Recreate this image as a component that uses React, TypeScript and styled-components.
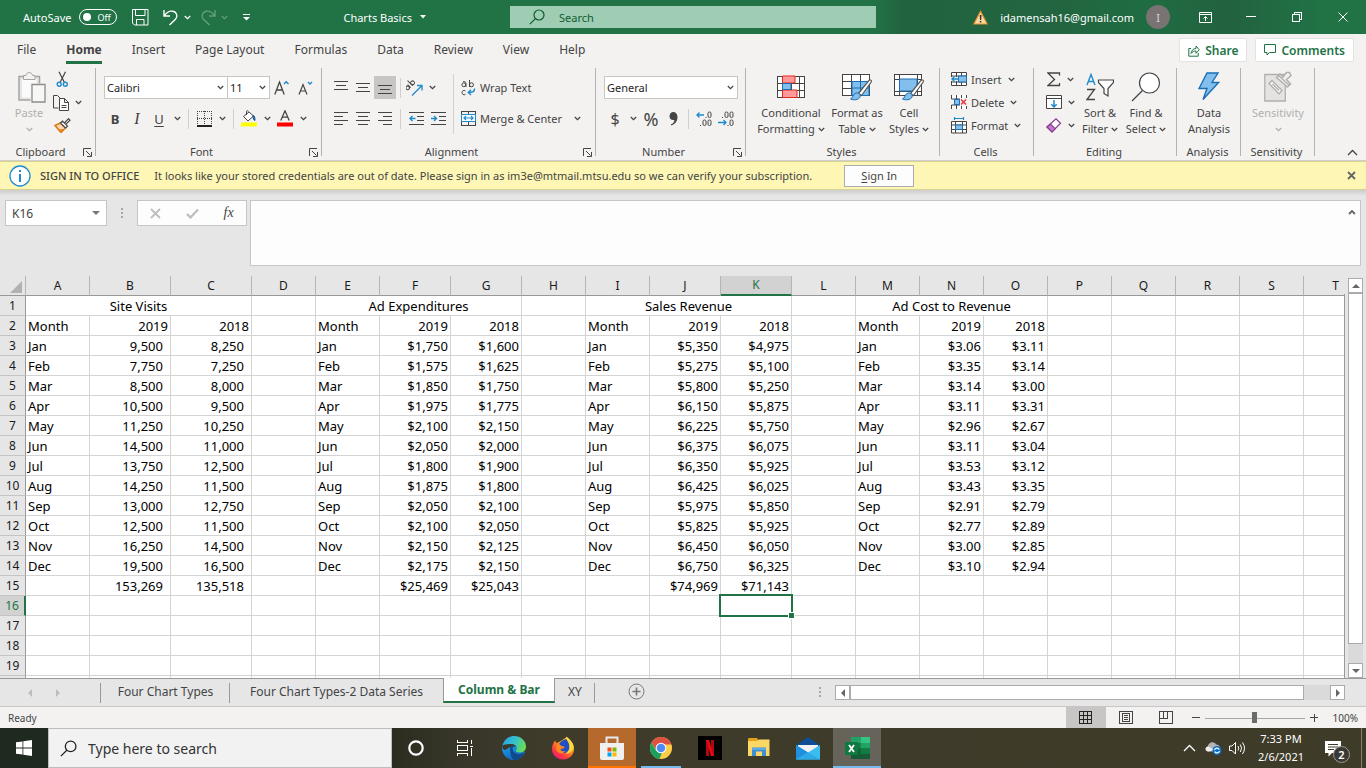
import React from 'react';
import styled, { createGlobalStyle, css } from 'styled-components';

const GlobalStyle = createGlobalStyle`
  *, *::before, *::after { box-sizing: border-box; }
  body { margin: 0; overflow: hidden; }
  body, button, input, select, textarea { font-family: "Noto Sans", "Open Sans", "Liberation Sans", sans-serif; }
  button { border: 0; padding: 0; background: none; color: inherit; font-size: inherit; cursor: default; }
  svg { display: block; flex: none; }
`;

const INK = '#444444';
const GREEN = '#217346';
const BLUE = '#1e8bcd';

const Window = styled.div`
  display: flex;
  flex-direction: column;
  height: 100vh;
  color: ${INK};
  font-size: 11px;
  background: #e6e6e6;
`;

/* ---------- title bar ---------- */

const TitleBar = styled.header`
  display: grid;
  grid-template-columns: 510fr 366fr 490fr;
  align-items: center;
  height: 34px;
  flex: none;
  color: #fff;
  background: linear-gradient(90deg, ${GREEN} 64%, #22633f 66%, #226540 77%, #1f6c42 84%, #22623f 90%, #217346 97%);
`;

const QuickAccess = styled.div`
  display: flex;
  align-items: center;
  padding-left: 23px;
`;

const AutoSave = styled.label`
  display: flex;
  align-items: center;
  gap: 8px;
`;

const Toggle = styled.button`
  display: flex;
  align-items: center;
  gap: 6px;
  width: 38px;
  height: 16px;
  padding-left: 3px;
  border: 1px solid #fff;
  border-radius: 8px;
  font-size: 9px;
  &::before {
    content: '';
    width: 8px;
    height: 8px;
    border-radius: 50%;
    background: #fff;
  }
`;

const BarButton = styled.button<{ $w: number; $dim?: boolean }>`
  display: flex;
  align-items: center;
  justify-content: center;
  gap: 5px;
  width: ${p => p.$w}px;
  height: 24px;
  opacity: ${p => (p.$dim ? 0.3 : 1)};
`;

const DocTitle = styled.button`
  display: flex;
  align-items: center;
  gap: 8px;
  margin-left: auto;
  margin-right: 84px;
`;

const SearchBox = styled.label`
  display: flex;
  align-items: center;
  gap: 14px;
  height: 22px;
  padding-left: 19px;
  background: #9fcdb3;
  color: #0e5c2f;
  input {
    flex: 1;
    min-width: 0;
    border: 0;
    padding: 0;
    outline: 0;
    background: none;
    font-size: 11px;
    color: inherit;
  }
  input::placeholder { color: inherit; opacity: 1; }
`;

const Account = styled.div`
  display: flex;
  align-items: center;
  justify-content: flex-end;
`;

const Email = styled.span`
  margin: 0 12px 0 12px;
`;

const Avatar = styled.span`
  display: flex;
  align-items: center;
  justify-content: center;
  width: 24px;
  height: 24px;
  margin-right: 12px;
  border-radius: 50%;
  background: #7a7374;
  color: #d8d4d4;
`;

/* ---------- ribbon ---------- */

const RibbonTabs = styled.nav`
  display: flex;
  align-items: center;
  flex: none;
  gap: 30px;
  height: 32px;
  padding: 0 12px 0 17px;
  background: #f3f2f1;
  font-size: 12px;
`;

const RibbonTab = styled.a<{ $active?: boolean }>`
  display: block;
  height: 28px;
  line-height: 28px;
  color: ${INK};
  text-decoration: none;
  ${p => p.$active && css`
    font-weight: 700;
    border-bottom: 3px solid ${GREEN};
  `}
`;

const TabActions = styled.div`
  display: flex;
  gap: 8px;
  margin-left: auto;
`;

const ActionButton = styled.button`
  display: flex;
  align-items: center;
  gap: 5px;
  height: 24px;
  padding: 0 8px;
  border: 1px solid #e4e2e0;
  border-radius: 2px;
  background: #fff;
  color: ${GREEN};
  font-weight: 600;
  font-size: 12px;
`;

const Ribbon = styled.section`
  display: flex;
  flex: none;
  height: 95px;
  background: #f3f2f1;
  border-bottom: 1px solid #d0cfce;
`;

const Group = styled.div<{ $w: number }>`
  display: flex;
  flex-direction: column;
  flex: none;
  width: ${p => p.$w}px;
  height: 90px;
  padding-top: 2px;
  background: linear-gradient(#b4b2b0, #b4b2b0) right 2px / 1px 100% no-repeat;
`;

const GroupBody = styled.div<{ $left?: number; $center?: boolean }>`
  display: flex;
  flex: 1;
  padding-left: ${p => p.$left ?? 8}px;
  justify-content: ${p => (p.$center ? 'center' : 'flex-start')};
`;

const GroupLabel = styled.div`
  display: flex;
  align-items: center;
  height: 16px;
  margin-bottom: -4px;
  padding-right: 3px;
  span { flex: 1; text-align: center; line-height: 16px; }
`;

const Launcher = styled.button`
  width: 12px;
  height: 12px;
  display: flex;
  align-items: center;
  justify-content: center;
`;

const Stack = styled.div`
  display: flex;
  flex-direction: column;
  gap: 8px;
  padding-top: 8px;
`;

const ToolRow = styled.div`
  display: flex;
  align-items: center;
  height: 23px;
`;

const Tool = styled.button<{ $w?: number; $on?: boolean }>`
  display: flex;
  align-items: center;
  justify-content: center;
  gap: 6px;
  width: ${p => p.$w ?? 22}px;
  height: 23px;
  background: ${p => (p.$on ? '#c8c6c4' : 'none')};
`;

const LabelTool = styled.button<{ $gap?: number }>`
  display: flex;
  align-items: center;
  gap: 4px;
  height: 23px;
  white-space: nowrap;
  span { margin-right: ${p => p.$gap ?? 2}px; }
`;

const Rule = styled.i<{ $h?: number }>`
  width: 1px;
  height: ${p => p.$h ?? 20}px;
  margin: 0 4px;
  background: #d2d0ce;
`;

const SideRule = styled(Rule)`
  margin: 6px 7px 0 4px;
`;

const Glyph = styled.span<{ $size?: number; $bold?: boolean; $italic?: boolean; $underline?: boolean }>`
  font-size: ${p => p.$size ?? 13}px;
  line-height: 20px;
  font-weight: ${p => (p.$bold ? 700 : 400)};
  font-style: ${p => (p.$italic ? 'italic' : 'normal')};
  font-family: ${p => (p.$italic ? '"Liberation Serif", serif' : 'inherit')};
  text-decoration: ${p => (p.$underline ? 'underline' : 'none')};
  text-underline-offset: 2px;
`;

const Combo = styled.label<{ $w: number }>`
  display: flex;
  align-items: center;
  width: ${p => p.$w}px;
  height: 23px;
  padding-right: 3px;
  border: 1px solid #c8c6c4;
  background: #fff;
  & + & { border-left: 0; }
  select {
    flex: 1;
    min-width: 0;
    appearance: none;
    border: 0;
    outline: 0;
    padding: 0 0 0 2px;
    background: none;
    font-size: 11px;
    color: #262626;
  }
`;

const BigTool = styled.button<{ $w: number; $dim?: boolean }>`
  display: flex;
  flex-direction: column;
  align-items: center;
  width: ${p => p.$w}px;
  color: ${p => (p.$dim ? '#b1afad' : INK)};
  line-height: 16px;
  white-space: nowrap;
`;

const BigIcon = styled.span`
  display: flex;
  align-items: center;
  height: 37px;
`;

const BigLine = styled.span`
  display: flex;
  align-items: center;
  justify-content: center;
  gap: 3px;
  height: 16px;
`;

const SmallStack = styled.div`
  display: flex;
  flex-direction: column;
`;

const CollapseCell = styled.div`
  flex: 1;
  display: flex;
  align-items: flex-end;
  justify-content: flex-end;
  padding: 0 8px 4px 0;
`;

/* ---------- message bar ---------- */

const MessageBar = styled.div`
  display: flex;
  align-items: center;
  flex: none;
  height: 29px;
  padding: 0 10px 0 9px;
  border: solid #d8d391;
  border-width: 1px 0;
  background: #fdf6b5;
  font-size: 11px;
  white-space: nowrap;
  strong { margin: 0 15px 0 9px; font-weight: 500; }
`;

const SignIn = styled.button`
  width: 70px;
  height: 22px;
  margin-left: 32px;
  border: 1px solid #ababab;
  background: #fdfdfd;
  font-size: 11px;
  u { text-underline-offset: 2px; }
`;

const CloseMessage = styled.button`
  margin-left: auto;
`;

/* ---------- formula bar ---------- */

const FormulaBar = styled.div`
  display: flex;
  align-items: flex-start;
  flex: none;
  height: 86px;
  padding: 10px 5px 10px 5px;
  background: linear-gradient(#cdcdcd, #e6e6e6 6px);
`;

const NameBox = styled.label`
  display: flex;
  align-items: center;
  width: 102px;
  height: 26px;
  padding: 0 6px;
  border: 1px solid #c6c6c6;
  background: #fff;
  input {
    flex: 1;
    min-width: 0;
    border: 0;
    outline: 0;
    padding: 0;
    font-size: 12px;
    color: ${INK};
  }
`;

const Dots = styled.i`
  display: block;
  width: 2px;
  height: 10px;
  background: repeating-linear-gradient(#a6a6a6 0 2px, transparent 2px 4px);
`;

const DotsSlot = styled.span`
  display: flex;
  align-items: center;
  justify-content: center;
  width: 30px;
  height: 26px;
`;

const FormulaButtons = styled.div`
  display: flex;
  align-items: center;
  justify-content: space-around;
  width: 110px;
  height: 26px;
  margin-right: 3px;
  border: 1px solid #c6c6c6;
  background: #fdfdfd;
`;

const FormulaField = styled.div`
  display: flex;
  flex: 1;
  align-self: stretch;
  padding: 8px 4px 0 0;
  border: 1px solid #c6c6c6;
  background: #fdfdfd;
  textarea {
    flex: 1;
    border: 0;
    outline: 0;
    resize: none;
    background: none;
  }
  button { align-self: flex-start; }
`;

/* ---------- worksheet ---------- */

const Workspace = styled.main`
  display: flex;
  flex: 1;
  min-height: 0;
`;

const SheetFrame = styled.div`
  flex: 1;
  min-width: 0;
  overflow: hidden;
  background: #fff;
  border-right: 1px solid #999;
  border-image: linear-gradient(#e6e6e6 19px, #999 19px) 1;
`;

const Sheet = styled.table`
  table-layout: fixed;
  width: 1368px;
  border-collapse: separate;
  border-spacing: 0;
  color: #000;
  font-size: 13px;
`;

const ColumnHead = styled.th<{ $selected?: boolean }>`
  height: 20px;
  padding: 0;
  line-height: 18px;
  font-weight: 400;
  font-size: 12px;
  color: ${p => (p.$selected ? GREEN : '#1a1a1a')};
  background: ${p => (p.$selected ? '#d2d2d2' : '#e6e6e6')};
  border-right: 1px solid #b5b5b5;
  border-bottom: ${p => (p.$selected ? `2px solid ${GREEN}` : '1px solid #999')};
`;

const Corner = styled(ColumnHead)`
  svg { margin: 2px 3px 0 auto; }
`;

const RowHead = styled.th<{ $selected?: boolean }>`
  height: 20px;
  padding: 0;
  line-height: 18px;
  font-weight: 400;
  font-size: 12px;
  color: ${p => (p.$selected ? GREEN : '#1a1a1a')};
  background: ${p => (p.$selected ? '#d2d2d2' : '#e6e6e6')};
  border-right: ${p => (p.$selected ? `2px solid ${GREEN}` : '1px solid #999')};
  border-bottom: 1px solid #c4c4c4;
`;

const Cell = styled.td<{ $align?: 'left' | 'right' | 'center'; $accounting?: boolean }>`
  position: relative;
  height: 20px;
  padding: 0 ${p => (p.$accounting ? 7 : 2)}px 0 2px;
  line-height: 18px;
  white-space: nowrap;
  text-align: ${p => p.$align ?? 'left'};
  border-right: 1px solid #d4d4d4;
  border-bottom: 1px solid #d4d4d4;
`;

const Selection = styled.div`
  position: absolute;
  z-index: 1;
  inset: -2px;
  border: 2px solid ${GREEN};
  &::after {
    content: '';
    position: absolute;
    right: -4px;
    bottom: -4px;
    width: 7px;
    height: 7px;
    border: solid #fff;
    border-width: 1px;
    background: ${GREEN};
  }
`;

const VScroll = styled.div`
  display: flex;
  flex-direction: column;
  width: 15px;
  margin: 2px 3px 0 3px;
  background: #dadada;
`;

const ScrollButton = styled.button`
  display: flex;
  align-items: center;
  justify-content: center;
  flex: none;
  width: 15px;
  height: 15px;
  border: 1px solid #ababab;
  background: #fff;
`;

const VThumb = styled.div`
  flex: 1;
  margin-bottom: 19px;
  border: 1px solid #ababab;
  background: #fff;
`;

/* ---------- sheet tabs ---------- */

const SheetBar = styled.div`
  display: flex;
  flex: none;
  height: 29px;
  border-top: 1px solid #999;
  border-bottom: 1px solid #c6c6c6;
  font-size: 12px;
`;

const SheetNav = styled.div`
  display: flex;
  align-items: center;
  justify-content: center;
  gap: 20px;
  width: 101px;
  padding-right: 14px;
  background: linear-gradient(#999, #999) right 4px / 1px 20px no-repeat;
`;

const SheetTab = styled.button<{ $w: number; $active?: boolean; $rule?: boolean }>`
  width: ${p => p.$w}px;
  height: 27px;
  padding-bottom: 2px;
  white-space: nowrap;
  ${p => p.$rule && css`
    background: linear-gradient(#999, #999) right 4px / 1px 20px no-repeat;
  `}
  ${p => p.$active && css`
    height: 25px;
    margin-top: -1px;
    padding-bottom: 0;
    color: ${GREEN};
    font-weight: 700;
    background: #fff;
    border: solid #999;
    border-width: 0 1px;
    border-bottom: 2px solid ${GREEN};
  `}
`;

const AddSheet = styled.button`
  margin-left: 33px;
  padding-bottom: 2px;
`;

const HScroll = styled.div`
  display: flex;
  width: 510px;
  height: 15px;
  margin: 6px 21px 0 14px;
  background: #dadada;
`;

const HThumb = styled.div`
  flex: 1;
  margin: 0 26px 0 0;
  border: 1px solid #ababab;
  background: #fff;
`;

const SheetBarEnd = styled.div`
  display: flex;
  margin-left: auto;
  > i { margin-top: 8px; }
`;

/* ---------- status bar ---------- */

const StatusBar = styled.footer`
  display: flex;
  align-items: center;
  flex: none;
  height: 21px;
  padding: 0 8px;
  background: #f3f2f1;
  font-size: 10px;
`;

const ViewButton = styled.button<{ $on?: boolean }>`
  display: flex;
  align-items: center;
  justify-content: center;
  width: 40px;
  height: 21px;
  background: ${p => (p.$on ? '#c8c6c4' : 'none')};
`;

const StatusEnd = styled.div`
  display: flex;
  align-items: center;
  margin-left: auto;
`;

const ZoomControl = styled.div`
  display: flex;
  align-items: center;
  gap: 5px;
  margin: 0 15px 0 6px;
`;

const ZoomSlider = styled.input`
  appearance: none;
  width: 100px;
  height: 12px;
  margin: 0;
  background: linear-gradient(#a6a6a6, #a6a6a6) 0 6px / 100% 1px no-repeat;
  &::-webkit-slider-thumb {
    appearance: none;
    width: 5px;
    height: 11px;
    background: #6b6b6b;
  }
`;

/* ---------- taskbar ---------- */

const Taskbar = styled.footer`
  display: flex;
  flex: none;
  height: 40px;
  color: #fff;
  background: linear-gradient(90deg, #1e291f 0, #1e291f 48px, #2b2c1f 390px, #38362a 460px, #3e3b2a 540px, #3e3b29 100%);
`;

const StartButton = styled.button`
  display: flex;
  align-items: center;
  justify-content: center;
  width: 48px;
`;

const TaskSearch = styled.label`
  display: flex;
  align-items: center;
  gap: 11px;
  width: 344px;
  padding-left: 11px;
  border: 1px solid #bdbdbd;
  background: #f2f2f2;
  color: #1f1f1f;
  input {
    flex: 1;
    min-width: 0;
    border: 0;
    outline: 0;
    padding: 0;
    background: none;
    font-size: 14px;
    color: inherit;
  }
  input::placeholder { color: #333; opacity: 1; }
`;

const TaskApps = styled.div`
  display: flex;
  gap: 1px;
`;

const TaskApp = styled.button<{ $state?: 'alert' | 'running' | 'active' }>`
  display: flex;
  align-items: center;
  justify-content: center;
  width: 48px;
  height: 40px;
  ${p => p.$state === 'alert' && css`
    background: #b5692c;
    box-shadow: inset 0 -2px #ff7300;
  `}
  ${p => p.$state === 'running' && css`
    background: linear-gradient(#76b9ed, #76b9ed) 4px 38px / 40px 2px no-repeat;
  `}
  ${p => p.$state === 'active' && css`
    background: #65635a;
    box-shadow: inset 0 -2px #76b9ed;
  `}
`;

const Tray = styled.div`
  display: flex;
  align-items: center;
  margin-left: auto;
`;

const Clock = styled.time`
  width: 60px;
  margin: 0 5px 0 2px;
  font-size: 11px;
  line-height: 18px;
  text-align: center;
`;

const Notifications = styled.button`
  position: relative;
  width: 24px;
  height: 24px;
  margin: 2px 12px 0 9px;
`;

const Badge = styled.span`
  position: absolute;
  right: -1px;
  bottom: -2px;
  width: 17px;
  height: 17px;
  border: 1px solid #9c9a92;
  border-radius: 50%;
  background: #3a3938;
  font-size: 11px;
  font-weight: 600;
  line-height: 15px;
  text-align: center;
`;

const ShowDesktop = styled.button`
  width: 5px;
  height: 40px;
  border-left: 1px solid #85836f;
`;

/* ---------- icons ---------- */

type IconProps = { w: number; h: number; children: React.ReactNode; crisp?: boolean; stroke?: string };
const Icon = ({ w, h, children, crisp, stroke = INK }: IconProps) => (
  <svg width={w} height={h} viewBox={`0 0 ${w} ${h}`} fill="none" stroke={stroke} shapeRendering={crisp ? 'crispEdges' : 'auto'} aria-hidden="true">
    {children}
  </svg>
);

const Chevron = ({ color = INK }: { color?: string }) => (
  <Icon w={7} h={5} stroke={color}><path d="M.8 1 3.5 3.6 6.2 1" strokeWidth="1.3" /></Icon>
);

const Triangle = ({ dir, color = '#666' }: { dir: 'up' | 'down' | 'left' | 'right'; color?: string }) => {
  const d = { up: 'M0 6 4 2 8 6z', down: 'M0 2h8L4 6z', left: 'M6 0v8L2 4z', right: 'M2 0v8l4-4z' }[dir];
  return <Icon w={8} h={8} stroke="none"><path d={d} fill={color} /></Icon>;
};

const LauncherIcon = () => (
  <Icon w={9} h={9}><path d="M.5 8V.5H8M3 3l4.500 4.500M8.500 4v4.500H4" /></Icon>
);

const Magnifier = ({ size, color }: { size: number; color: string }) => (
  <svg width={size} height={size} viewBox="0 0 16 16" fill="none" stroke={color} strokeWidth="1.2" aria-hidden="true">
    <circle cx="10" cy="6" r="5" /><path d="M6.4 9.6.8 15.2" />
  </svg>
);

const lineSets: Record<string, number[][]> = {
  top: [[0, 14, 1], [2, 12, 5], [0, 14, 9]],
  middle: [[0, 14, 3], [2, 12, 7], [0, 14, 11]],
  bottom: [[0, 14, 5], [2, 12, 9], [0, 14, 13]],
  left: [[0, 14, 1], [0, 9, 5], [0, 14, 9], [0, 9, 13]],
  center: [[0, 14, 1], [2, 12, 5], [0, 14, 9], [2, 12, 13]],
  right: [[0, 14, 1], [5, 14, 5], [0, 14, 9], [5, 14, 13]],
};
const Lines = ({ kind }: { kind: string }) => (
  <Icon w={14} h={15} crisp>
    {lineSets[kind].map(([a, b, y]) => <path key={y} d={`M${a} ${y}.5H${b}`} />)}
  </Icon>
);

const Indent = ({ out }: { out?: boolean }) => (
  <Icon w={15} h={15}>
    <path d="M0 1.5h15M8 5.5h7M8 9.5h7M0 13.5h15" shapeRendering="crispEdges" />
    <path d={out ? 'M6.5 7.5H1M3.5 5 1 7.5 3.5 10' : 'M0 7.5h5.5M3 5l2.5 2.5L3 10'} stroke={BLUE} strokeWidth="1.4" />
  </Icon>
);

const SaveIcon = () => (
  <Icon w={17} h={17} stroke="#fff"><path d="M.5.5h15.500v15.500H2.500l-2-2zM3.500.5v6h9.500v-6M4.500 16v-5.500h7.500V16" /></Icon>
);
const UndoIcon = () => (
  <Icon w={16} h={17} stroke="#fff"><path d="M1 1v6h6M1.300 6.700C4 3 7 1.500 10 2.300c4 1 5 5.200 2.500 8L6.500 16" strokeWidth="1.4" /></Icon>
);
const RedoIcon = () => (
  <Icon w={16} h={17} stroke="#fff"><path d="M15 1v6H9M14.700 6.700C12 3 9 1.500 6 2.300c-4 1-5 5.200-2.500 8L9.500 16" strokeWidth="1.4" /></Icon>
);
const WarningIcon = () => (
  <Icon w={15} h={15} stroke="none">
    <path d="M7.500 0 15 14.500H0z" fill="#e8912d" /><path d="M7.500 2.500 13.300 13.500H1.700z" fill="#fbd9a0" />
    <path d="M6.700 5h1.800l-.3 5H7zM6.800 11h1.600v1.600H6.800z" fill="#333" />
  </Icon>
);

const PasteIcon = () => (
  <Icon w={34} h={33} stroke="#a6a4a2">
    <g transform="translate(6 2)">
      <path d="M1 4.500h20.500V28H1z" fill="#e6e5e4" strokeWidth="1.500" />
      <path d="M4 7h14.500v18.500H4z" fill="#fafafa" stroke="none" />
      <path d="M5.500 7.500v-4H8c.4-4 6-4 6.500 0H17v4z" fill="#f3f2f1" />
      <path d="M12.500 11.500H22V29h-9.500z" fill="#f3f2f1" stroke="none" />
      <path d="M14 12.500h13V30H14z" fill="#f7f7f6" stroke="#8f8d8b" strokeWidth="1.300" />
    </g>
  </Icon>
);
const CutIcon = () => (
  <Icon w={13} h={17}>
    <path d="M3 .8 8.300 11.300M9.500.8 4.200 11.300" strokeWidth="1.200" />
    <circle cx="3.200" cy="13.300" r="2" stroke={BLUE} strokeWidth="1.400" /><circle cx="9.300" cy="13.300" r="2" stroke={BLUE} strokeWidth="1.400" />
  </Icon>
);
const CopyIcon = () => (
  <Icon w={16} h={16}>
    <path d="M5.500 13H.5V.5h4L7 3" /><path d="M6.500 3.500h5l4 4v8h-9zM11.500 3.500v4h4M8.500 10.500h5M8.500 12.500h5" fill="#fff" />
  </Icon>
);
const BrushIcon = () => (
  <Icon w={17} h={15}>
    <path d="M1 7.500 6.500 5l5 5L7 14.500z" fill="#fcd9b0" stroke="#e07b16" strokeWidth="1.500" /><path d="m1.500 8 5.500 6 3-2.500-5 .5z" fill="#f0912f" stroke="#e07b16" />
    <path d="M6.500 5 8.500 3.200l5 5-2 1.800zM10.500 5l4-4.300 1.500 1.500-4 4" fill="#fff" strokeWidth="1.200" />
  </Icon>
);
const GrowFont = ({ shrink }: { shrink?: boolean }) => (
  <Icon w={16} h={16}>
    {shrink
      ? <path d="M1 14.500 5 4.500l4 10M2.500 11h5" strokeWidth="1.200" />
      : <path d="M.8 14.500 5.500 2l4.700 12.500M2.500 10h6" strokeWidth="1.300" />}
    <path d={shrink ? 'm10 2 2 2 2-2' : 'm10 4 2.200-2.300L14.500 4'} stroke={BLUE} strokeWidth="1.400" />
  </Icon>
);
const BordersIcon = () => (
  <Icon w={15} h={16} crisp>
    <path d="M0 .5h15M.5 0v14M14.500 0v14M7.500 0v14M0 7.500h15" strokeDasharray="1 1" /><path d="M0 14.500h15" strokeWidth="2" stroke="#222" />
  </Icon>
);
const FillIcon = () => (
  <Icon w={16} h={17}>
    <path d="m2.500 6.500 5.500-4.500L12.500 6 7 11z" fill="#fff" /><path d="M5.500 5V1.500c0-1 2-1 2 0" /><path d="M12 5.500c1.500 0 2 2 2 5-1.200-.2-2-2-2-5z" fill={BLUE} stroke="#11508c" />
    <path d="M0 14.500h16" stroke="#ffff00" strokeWidth="4" />
  </Icon>
);
const FontColorIcon = () => (
  <Icon w={16} h={17}>
    <path d="M3.800 10.500 8 .8l4.200 9.700M5.300 7.200h5.400" strokeWidth="1.300" /><path d="M0 14.500h16" stroke="#ff0000" strokeWidth="4" />
  </Icon>
);
const OrientIcon = () => (
  <Icon w={17} h={16}>
    <g transform="translate(1.500 10.500) rotate(-45)">
      <circle cx="2" cy="-1.800" r="1.800" /><path d="M4.200-4v4.300M7-7V.3" /><circle cx="9" cy="-1.800" r="1.900" />
    </g>
    <path d="M6 15.500 15.500 6M11 5.500h5v5" stroke={BLUE} strokeWidth="1.300" />
  </Icon>
);
const WrapIcon = () => (
  <Icon w={15} h={17}>
    <circle cx="2.800" cy="5.800" r="1.900" /><path d="M2 2.800c1.500-.5 3 0 3 1.600V8M8.500 1v7" /><circle cx="10.500" cy="5.800" r="2" /><path d="M4.500 11.800c-1.800-1-3.500 0-3.500 1.800s1.700 2.700 3.500 1.800" />
    <path d="M13.500 9.500c.5 3-2 4-6 4M10 10.800 7.200 13.500 10 16" stroke={BLUE} strokeWidth="1.400" />
  </Icon>
);
const MergeIcon = () => (
  <Icon w={15} h={15}>
    <path d="M.5.5h14v14H.5zM7.500 0v4M7.500 11v4" shapeRendering="crispEdges" />
    <path d="M.5 3.500h14v7H.5z" fill="#fff" stroke={BLUE} /><path d="M3 7h9M5 5 3 7l2 2M10 5l2 2-2 2" stroke={BLUE} strokeWidth="1.200" />
  </Icon>
);
const DecimalIcon = ({ less }: { less?: boolean }) => (
  <Icon w={16} h={16}>
    {less ? (
      <>
        <path d="M4 6.500h1" /><rect x="7" y="1" width="3" height="5.500" rx="1.400" /><rect x="12" y="1" width="3" height="5.500" rx="1.400" />
        <rect x="12" y="9" width="3" height="5.500" rx="1.400" /><path d="M9.500 14.500h1" /><path d="M0 11.500h8M5.500 9 8 11.500 5.500 14" stroke={BLUE} strokeWidth="1.300" />
      </>
    ) : (
      <>
        <rect x="12" y="1" width="3" height="5.500" rx="1.400" /><path d="M9.500 6.500h1" /><path d="M8 4H.5M3.500 1.500 1 4l2.500 2.500" stroke={BLUE} strokeWidth="1.300" />
        <path d="M4 14.500h1" /><rect x="7" y="9" width="3" height="5.500" rx="1.400" /><rect x="12" y="9" width="3" height="5.500" rx="1.400" />
      </>
    )}
  </Icon>
);
const CondIcon = () => (
  <Icon w={28} h={24}>
    <path d="M.5 1h27v21.500H.5zM.5 8h27M.5 15h27M5.500 1v21.500M14 1v21.500M22.500 1v21.500" fill="#fff" shapeRendering="crispEdges" />
    <path d="M5.500 1h12.500v7H5.500zM5.500 15h14.500v7.500H5.500z" fill="#ff9a9a" stroke="#e0281c" /><path d="M5.500 8.500H14v6H5.500z" fill="#83bfec" stroke="#1c6fb5" />
  </Icon>
);
const Paintbrush = () => (
  <>
    <path d="M16.500 20.500 27 7.500c1-1.500 3 0 2.200 1.500L19.500 22.500z" fill="#fff" stroke="#555" strokeWidth="1.200" />
    <path d="M8.500 26c2.500-.5 2-5 5.500-6 2.500-.6 5 1.500 4 4-1.200 3-6.500 3.500-9.500 2z" fill="#83bfec" stroke="#1c6fb5" />
  </>
);
const TableIcon = () => (
  <Icon w={30} h={28}>
    <path d="M.5 1h27v21.500H.5zM.5 8h27M.5 15h27M9.500 1v21.500M18.500 1v21.500" fill="#fff" shapeRendering="crispEdges" />
    <path d="M10 8.500h17v14H10z" fill="#83bfec" stroke="#1c6fb5" /><path d="M18.500 8.500v14M10 15h17" stroke="#1c6fb5" /><Paintbrush />
  </Icon>
);
const CellStyleIcon = () => (
  <Icon w={30} h={28}>
    <path d="M.5 1h27v21.500H.5zM.5 6h27M.5 18h27M5.500 1v21.500M23 1v21.500" fill="#fff" shapeRendering="crispEdges" />
    <path d="M5.500 6h17.500v12H5.500z" fill="#83bfec" stroke="#1c6fb5" /><Paintbrush />
  </Icon>
);
const InsertIcon = () => (
  <Icon w={16} h={15}>
    <path d="M.5.5h15v13H.5zM.5 4h15M.5 10h15M5.500.5V14M10.500.5V14" fill="#fff" />
    <path d="M7.500 4h8v6h-8z" fill="#83bfec" stroke="#1c6fb5" /><path d="M0 5h7v4H0z" fill="#f3f2f1" stroke="none" /><path d="M8 7H1M3.500 4.500 1 7l2.500 2.500" stroke={BLUE} strokeWidth="1.400" />
  </Icon>
);
const DeleteIcon = () => (
  <Icon w={16} h={15}>
    <path d="M.5 0v4h15V0M.5 14v-4h15v4M5.500 0v4M10.500 0v4M5.500 10v4M10.500 10v4" fill="#fff" />
    <path d="M3.500 4.500h5v5h-5z" fill="#83bfec" stroke="#1c6fb5" /><path d="M9 3h7v8H9z" fill="#f3f2f1" stroke="none" /><path d="m10 4.500 5 5M15 4.500l-5 5" stroke="#e8383f" strokeWidth="1.600" />
  </Icon>
);
const FormatIcon = () => (
  <Icon w={16} h={17}>
    <path d="M3.500 0v3M12.500 0v3M3.500 1.500h9" stroke={BLUE} strokeWidth="1.200" />
    <path d="M.5 4.500h15v11.500H.5zM.5 8h15M.5 12.500h15M4.500 4v12M11.500 4v12" fill="#fff" /><path d="M4.500 8h7v4.500h-7z" fill="#83bfec" stroke="#1c6fb5" />
  </Icon>
);
const SumIcon = () => <Icon w={14} h={15}><path d="M12.500 3.500V1H1l6.500 6.500L1 13.500h11.500V11" strokeWidth="1.300" /></Icon>;
const FillDownIcon = () => (
  <Icon w={16} h={15}><path d="M.5.5h15v13H.5zM.5 3.500h15" fill="#fff" /><path d="M8 5v7M5.300 9.300 8 12l2.700-2.700" stroke={BLUE} strokeWidth="1.500" /></Icon>
);
const EraserIcon = () => (
  <Icon w={16} h={15}>
    <path d="M1 9 10 .8l4.500 4.400L6 14z" fill="#fff" stroke="#8a3a93" strokeWidth="1.200" /><path d="m1 9 3.500-3 4.700 4.700L6 14z" fill="#c17ccb" stroke="#8a3a93" strokeWidth="1.200" />
  </Icon>
);
const SortIcon = () => (
  <Icon w={28} h={28}>
    <path d="M1 12 5 1.500 9 12M2.300 8.500h5.400" stroke={BLUE} strokeWidth="1.400" /><path d="M1 16.500h7.500L1 26.500h8" strokeWidth="1.300" />
    <path d="M12.500 7h15v2.500L22 15.500V23l-4-2.500v-5l-5.500-6z" fill="#fff" strokeWidth="1.200" />
  </Icon>
);
const FindIcon = () => (
  <Icon w={30} h={30}><circle cx="18.500" cy="11" r="10" fill="#fff" strokeWidth="1.200" /><path d="M11.500 18.500 1 29" strokeWidth="1.300" /></Icon>
);
const BoltIcon = () => (
  <Icon w={22} h={29} stroke="#1c6fb5"><path d="M9 1h11l-6 9.500h6.500L5 27.500l4-11H1z" fill="#83bfec" strokeWidth="1.400" /></Icon>
);
const SensIcon = () => (
  <Icon w={28} h={31} stroke="#b1afad">
    <path d="M.8 3.500h20.500V30H.8z" fill="#e4e3e2" strokeWidth="1.300" />
    <path d="m5 12.500 3-3 10 10-3 3.500zM8.500 13l6.500 6.500" fill="#f7f7f6" strokeWidth="1.300" />
    <path d="m12.500 6.500 3.500-3.500 3 3 3.500-4.500h3l1.500 3-4.500 4 4 4.500-3 3z" fill="#f0efee" strokeWidth="1.500" /><path d="m14.500 4.500 11 10" strokeWidth="1.300" />
  </Icon>
);

const ShareIcon = () => (
  <Icon w={12} h={13} stroke={GREEN}><path d="M3 4.500H.8v7.700h9.400V9M3 9.500c.5-3 2-4.800 5-5V2l3.300 3.800L8 9.300V7c-2.200 0-3.700.8-5 2.500z" /></Icon>
);
const CommentIcon = () => (
  <Icon w={12} h={12} stroke={GREEN}><path d="M.5.500h11v8h-6L3 11V8.500H.5z" /></Icon>
);

const TaskViewIcon = () => (
  <Icon w={16} h={16} stroke="#fff" crisp><path d="M.5 0v2.500h10V0M.500 16v-2.500h10V16M.5 5.500h10v5H.5zM14.500 0v4M14.500 8v8M13 6.500h3" /></Icon>
);
const EdgeIcon = () => (
  <Icon w={24} h={24} stroke="none">
    <defs>
      <linearGradient id="edgeTop" x1="0" y1=".3" x2="1" y2=".6"><stop offset="0" stopColor="#2aa4e8" /><stop offset=".5" stopColor="#35c1c8" /><stop offset="1" stopColor="#6be04e" /></linearGradient>
      <linearGradient id="edgeBody" x1="0" y1="0" x2=".6" y2="1"><stop offset="0" stopColor="#1fa0e6" /><stop offset="1" stopColor="#0f62bd" /></linearGradient>
    </defs>
    <path d="M.2 10C1 16 4 14 8 11l7-.5c.5 2-2.500 3.500.5 5 2.500 1.200 5 .8 7-.5l.5 1.500C21 21 17 24 12 24 5 24 0 18.500 0 12z" fill="url(#edgeBody)" />
    <path d="M.3 10C2 3 7 0 12 0c7 0 12 5 12 10.500 0 4-3 6-6.500 6-3 0-4-1.200-3.500-2.200 2-3.300-.5-6.300-5-6.300C5 8 1.500 8.500.3 10z" fill="url(#edgeTop)" />
    <path d="M8.200 14.500c-.8-3.500 1.300-5.500 3.800-5.500-1.500 2-2 4.500-.5 6.800 2 2.700 7 3.200 11 .7C20 21.500 16 24 12.500 24c-3-1-4-5-4.300-9.500z" fill="#114a8b" />
  </Icon>
);
const FirefoxIcon = () => (
  <Icon w={24} h={24} stroke="none">
    <defs><linearGradient id="fox" x1=".9" y1="0" x2=".2" y2="1"><stop offset="0" stopColor="#fff04a" /><stop offset=".4" stopColor="#ff9a1e" /><stop offset=".75" stopColor="#ff3b3f" /><stop offset="1" stopColor="#e31587" /></linearGradient></defs>
    <path d="M4 4.500 5.500 7 9 5.500 16 1c4 3 7 7 7 12 0 6-5 10.500-11 10.500S1 19 1 13c0-4 1.500-6 3-8.500z" fill="url(#fox)" />
    <path d="M8 8c2-3 5-4.500 7.500-5 2 1.500 3 4.500 3 8 0 4-2.500 6-5.500 6-3.500 0-5-2.500-5-4.500l3.500.5 2.500-2-3-.5z" fill="#214fc6" />
    <path d="M15.500.5c-1 4 3 5 3 10 0 3-1.500 6-4.500 7 5 .5 9-3 8.500-7.500C22 6 18 4.500 15.500.5z" fill="#ffd83a" /><path d="M6 8.500c1-.5 3 0 4 1.500l3 .5c-1 1.500-3 1.500-3.500 3 1 2 3 2 5 1.500-2.500 4-9.500 2-9.500-3z" fill="#ff8a1c" />
  </Icon>
);
const StoreIcon = () => (
  <Icon w={24} h={26} stroke="none">
    <path d="M6.500 9V2.500h11V9" stroke="#e9e9ee" strokeWidth="2" /><path d="M0 8h24v15q0 2-2 2H2q-2 0-2-2z" fill="#f1f0f0" />
    <path d="M7.500 12.500h4v4h-4z" fill="#f25022" /><path d="M12.500 12.500h4v4h-4z" fill="#7fba00" /><path d="M7.500 17.500h4v4h-4z" fill="#00a4ef" /><path d="M12.500 17.500h4v4h-4z" fill="#ffb900" />
  </Icon>
);
const ChromeIcon = () => (
  <Icon w={24} h={24} stroke="none">
    <circle cx="12" cy="12" r="11" fill="#ffcd46" />
    <path d="M2.500 6.500A11 11 0 0 1 21.500 6.500l.9 2H12l-5 5z" fill="#dd5144" /><path d="M2.500 6.500 7.200 14.800l5.500 2.500L10.500 23A11 11 0 0 1 2.500 6.500z" fill="#1aa15e" />
    <circle cx="12" cy="12" r="5.300" fill="#fff" /><circle cx="12" cy="12" r="4.300" fill="#4c8bf5" />
  </Icon>
);
const NetflixIcon = () => (
  <Icon w={24} h={24} stroke="none"><path d="M0 0h24v24H0z" fill="#000" /><path d="M8 4h3v16H8zM13 4h3v16h-3z" fill="#b1060f" /><path d="M8 4h3l5 16h-3z" fill="#e50914" /></Icon>
);
const ExplorerIcon = () => (
  <Icon w={22} h={20} stroke="none">
    <path d="M0 1q0-1 1-1h8l2 3H0z" fill="#e0a21b" /><path d="M0 3h9l2-1.500h10.500V18H0z" fill="#fbd866" /><path d="M4 18V9.500h14V18h-4v-4.500H8V18z" fill="#3f8fd2" /><path d="M4 10h14v2H4z" fill="#5aa9e6" />
  </Icon>
);
const MailIcon = () => (
  <Icon w={24} h={23} stroke="none">
    <path d="M12 0 24 8H0z" fill="#0f4e94" /><path d="M2 8h20v9H2z" fill="#f2f2f2" /><path d="m0 8 12 7.500L24 8v14.500H0z" fill="#39bdf0" /><path d="M0 8v14.500L12 15.500z" fill="#1f8fe0" /><path d="M24 22.500 12 15.500 0 22.500z" fill="#2fa9e6" />
  </Icon>
);
const ExcelIcon = () => (
  <Icon w={25} h={22} stroke="none">
    <path d="M6 0h19v22H6z" fill="#185c37" /><path d="M6 0h9.500v6H6z" fill="#21a366" /><path d="M15.500 0H25v6h-9.500z" fill="#33c481" /><path d="M6 6h9.500v5.500H6z" fill="#107c41" /><path d="M15.500 6H25v5.500h-9.500z" fill="#21a366" /><path d="M15.500 11.500H25v5.500h-9.500z" fill="#107c41" />
    <path d="M0 5h13v13H0z" fill="#0f7a40" /><path d="m4 8 5 7M9 8l-5 7" stroke="#fff" strokeWidth="1.800" />
  </Icon>
);

/* ---------- data ---------- */

const columns = [
  ['A', 64], ['B', 81], ['C', 81], ['D', 64], ['E', 64], ['F', 71], ['G', 71], ['H', 64], ['I', 64], ['J', 71],
  ['K', 71], ['L', 64], ['M', 64], ['N', 64], ['O', 64], ['P', 64], ['Q', 64], ['R', 64], ['S', 64], ['T', 64],
] as const;

const months = ['Jan', 'Feb', 'Mar', 'Apr', 'May', 'Jun', 'Jul', 'Aug', 'Sep', 'Oct', 'Nov', 'Dec'];

const blocks: Record<string, { title: string; values: [string[], string[]]; totals?: [string, string] }> = {
  A: {
    title: 'Site Visits',
    values: [
      ['9,500', '7,750', '8,500', '10,500', '11,250', '14,500', '13,750', '14,250', '13,000', '12,500', '16,250', '19,500'],
      ['8,250', '7,250', '8,000', '9,500', '10,250', '11,000', '12,500', '11,500', '12,750', '11,500', '14,500', '16,500'],
    ],
    totals: ['153,269', '135,518'],
  },
  E: {
    title: 'Ad Expenditures',
    values: [
      ['$1,750', '$1,575', '$1,850', '$1,975', '$2,100', '$2,050', '$1,800', '$1,875', '$2,050', '$2,100', '$2,150', '$2,175'],
      ['$1,600', '$1,625', '$1,750', '$1,775', '$2,150', '$2,000', '$1,900', '$1,800', '$2,100', '$2,050', '$2,125', '$2,150'],
    ],
    totals: ['$25,469', '$25,043'],
  },
  I: {
    title: 'Sales Revenue',
    values: [
      ['$5,350', '$5,275', '$5,800', '$6,150', '$6,225', '$6,375', '$6,350', '$6,425', '$5,975', '$5,825', '$6,450', '$6,750'],
      ['$4,975', '$5,100', '$5,250', '$5,875', '$5,750', '$6,075', '$5,925', '$6,025', '$5,850', '$5,925', '$6,050', '$6,325'],
    ],
    totals: ['$74,969', '$71,143'],
  },
  M: {
    title: 'Ad Cost to Revenue',
    values: [
      ['$3.06', '$3.35', '$3.14', '$3.11', '$2.96', '$3.11', '$3.53', '$3.43', '$2.91', '$2.77', '$3.00', '$3.10'],
      ['$3.11', '$3.14', '$3.00', '$3.31', '$2.67', '$3.04', '$3.12', '$3.35', '$2.79', '$2.89', '$2.85', '$2.94'],
    ],
  },
};

const blockOf = (index: number) => {
  const start = index - (index % 4);
  return { block: blocks[columns[start]?.[0] as string], offset: index % 4 };
};

const cellText = (row: number, index: number): string => {
  const { block, offset } = blockOf(index);
  if (!block || offset === 3) return '';
  if (row === 2) return ['Month', '2019', '2018'][offset];
  if (row >= 3 && row <= 14) return offset === 0 ? months[row - 3] : block.values[offset - 1][row - 3];
  if (row === 15 && offset > 0) return block.totals?.[offset - 1] ?? '';
  return '';
};

const SELECTED = { col: 'K', row: 16 };

function SheetRow({ row }: { row: number }) {
  const cells: React.ReactNode[] = [];
  for (let i = 0; i < columns.length; i++) {
    const name = columns[i][0];
    if (row === 1 && blocks[name]) {
      cells.push(<Cell key={name} colSpan={3} $align="center">{blocks[name].title}</Cell>);
      i += 2;
      continue;
    }
    const isMonth = i % 4 === 0;
    cells.push(
      <Cell key={name} $align={isMonth ? 'left' : 'right'} $accounting={row > 2 && (name === 'B' || name === 'C')}>
        {cellText(row, i)}
        {row === SELECTED.row && name === SELECTED.col && <Selection />}
      </Cell>,
    );
  }
  return (
    <tr>
      <RowHead scope="row" $selected={row === SELECTED.row}>{row}</RowHead>
      {cells}
    </tr>
  );
}

/* ---------- page parts ---------- */

function RibbonGroups() {
  return (
    <Ribbon>
      <Group $w={96}>
        <GroupBody $left={7}>
          <BigTool $w={44} $dim><BigIcon><PasteIcon /></BigIcon><BigLine>Paste</BigLine><BigLine><Chevron color="#b1afad" /></BigLine></BigTool>
          <SmallStack>
            <Tool aria-label="Cut"><CutIcon /></Tool>
            <Tool aria-label="Copy" $w={32}><CopyIcon /><Chevron /></Tool>
            <Tool aria-label="Format Painter"><BrushIcon /></Tool>
          </SmallStack>
        </GroupBody>
        <GroupLabel><span>Clipboard</span><Launcher aria-label="Clipboard options"><LauncherIcon /></Launcher></GroupLabel>
      </Group>

      <Group $w={226}>
        <GroupBody>
          <Stack>
            <ToolRow>
              <Combo $w={124}><select aria-label="Font"><option>Calibri</option></select><Chevron /></Combo>
              <Combo $w={42}><select aria-label="Font size"><option>11</option></select><Chevron /></Combo>
              <Tool $w={24} aria-label="Increase font size"><GrowFont /></Tool>
              <Tool $w={24} aria-label="Decrease font size"><GrowFont shrink /></Tool>
            </ToolRow>
            <ToolRow>
              <Tool aria-label="Bold"><Glyph $bold>B</Glyph></Tool>
              <Tool aria-label="Italic"><Glyph $italic $size={16}>I</Glyph></Tool>
              <Tool aria-label="Underline"><Glyph $underline>U</Glyph></Tool>
              <Tool $w={14} aria-label="Underline styles"><Chevron /></Tool>
              <Rule />
              <Tool aria-label="Borders"><BordersIcon /></Tool>
              <Tool $w={14} aria-label="Border styles"><Chevron /></Tool>
              <Rule />
              <Tool aria-label="Fill color"><FillIcon /></Tool>
              <Tool $w={14} aria-label="Fill colors"><Chevron /></Tool>
              <Tool aria-label="Font color"><FontColorIcon /></Tool>
              <Tool $w={14} aria-label="Font colors"><Chevron /></Tool>
            </ToolRow>
          </Stack>
        </GroupBody>
        <GroupLabel><span>Font</span><Launcher aria-label="Font options"><LauncherIcon /></Launcher></GroupLabel>
      </Group>

      <Group $w={274}>
        <GroupBody>
          <Stack>
            <ToolRow>
              <Tool aria-label="Top align"><Lines kind="top" /></Tool>
              <Tool aria-label="Middle align"><Lines kind="middle" /></Tool>
              <Tool $on aria-label="Bottom align"><Lines kind="bottom" /></Tool>
              <Rule />
              <Tool $w={32} aria-label="Orientation"><OrientIcon /><Chevron /></Tool>
            </ToolRow>
            <ToolRow>
              <Tool aria-label="Align left"><Lines kind="left" /></Tool>
              <Tool aria-label="Center"><Lines kind="center" /></Tool>
              <Tool aria-label="Align right"><Lines kind="right" /></Tool>
              <Rule />
              <Tool aria-label="Decrease indent"><Indent out /></Tool>
              <Tool aria-label="Increase indent"><Indent /></Tool>
            </ToolRow>
          </Stack>
          <SideRule $h={60} />
          <Stack>
            <LabelTool><WrapIcon /><span>Wrap Text</span></LabelTool>
            <LabelTool $gap={8}><MergeIcon /><span>Merge &amp; Center</span><Chevron /></LabelTool>
          </Stack>
        </GroupBody>
        <GroupLabel><span>Alignment</span><Launcher aria-label="Alignment options"><LauncherIcon /></Launcher></GroupLabel>
      </Group>

      <Group $w={150}>
        <GroupBody>
          <Stack>
            <Combo $w={134}><select aria-label="Number format"><option>General</option></select><Chevron /></Combo>
            <ToolRow>
              <Tool aria-label="Accounting format"><Glyph $size={16}>$</Glyph></Tool>
              <Tool $w={14} aria-label="Currencies"><Chevron /></Tool>
              <Tool aria-label="Percent style"><Glyph $size={18}>%</Glyph></Tool>
              <Tool aria-label="Comma style">
                <Icon w={9} h={14} stroke="none"><path d="M4.200 0C6.800 0 8.500 2 8.500 5c0 4-2.500 7.500-6.500 8.500v-1.200c2-.8 3.300-2.300 3.400-4.400C2.500 8.500.5 7 .5 4.300.5 2 2 0 4.200 0z" fill={INK} /></Icon>
              </Tool>
              <Rule />
              <Tool aria-label="Increase decimal"><DecimalIcon /></Tool>
              <Tool aria-label="Decrease decimal"><DecimalIcon less /></Tool>
            </ToolRow>
          </Stack>
        </GroupBody>
        <GroupLabel><span>Number</span><Launcher aria-label="Number options"><LauncherIcon /></Launcher></GroupLabel>
      </Group>

      <Group $w={194}>
        <GroupBody>
          <BigTool $w={74}><BigIcon><CondIcon /></BigIcon><BigLine>Conditional</BigLine><BigLine>Formatting <Chevron /></BigLine></BigTool>
          <BigTool $w={58}><BigIcon><TableIcon /></BigIcon><BigLine>Format as</BigLine><BigLine>Table <Chevron /></BigLine></BigTool>
          <BigTool $w={46}><BigIcon><CellStyleIcon /></BigIcon><BigLine>Cell</BigLine><BigLine>Styles <Chevron /></BigLine></BigTool>
        </GroupBody>
        <GroupLabel><span>Styles</span></GroupLabel>
      </Group>

      <Group $w={94}>
        <GroupBody $left={11}>
          <SmallStack>
            <LabelTool><InsertIcon /><span>Insert</span><Chevron /></LabelTool>
            <LabelTool><DeleteIcon /><span>Delete</span><Chevron /></LabelTool>
            <LabelTool><FormatIcon /><span>Format</span><Chevron /></LabelTool>
          </SmallStack>
        </GroupBody>
        <GroupLabel><span>Cells</span></GroupLabel>
      </Group>

      <Group $w={143}>
        <GroupBody $left={10}>
          <SmallStack>
            <Tool $w={32} aria-label="AutoSum"><SumIcon /><Chevron /></Tool>
            <Tool $w={32} aria-label="Fill"><FillDownIcon /><Chevron /></Tool>
            <Tool $w={32} aria-label="Clear"><EraserIcon /><Chevron /></Tool>
          </SmallStack>
          <BigTool $w={48}><BigIcon><SortIcon /></BigIcon><BigLine>Sort &amp;</BigLine><BigLine>Filter <Chevron /></BigLine></BigTool>
          <BigTool $w={44}><BigIcon><FindIcon /></BigIcon><BigLine>Find &amp;</BigLine><BigLine>Select <Chevron /></BigLine></BigTool>
        </GroupBody>
        <GroupLabel><span>Editing</span></GroupLabel>
      </Group>

      <Group $w={64}>
        <GroupBody $left={0} $center>
          <BigTool $w={60}><BigIcon><BoltIcon /></BigIcon><BigLine>Data</BigLine><BigLine>Analysis</BigLine></BigTool>
        </GroupBody>
        <GroupLabel><span>Analysis</span></GroupLabel>
      </Group>

      <Group $w={74}>
        <GroupBody $left={0} $center>
          <BigTool $w={60} $dim><BigIcon><SensIcon /></BigIcon><BigLine>Sensitivity</BigLine><BigLine><Chevron color="#b1afad" /></BigLine></BigTool>
        </GroupBody>
        <GroupLabel><span>Sensitivity</span></GroupLabel>
      </Group>

      <CollapseCell>
        <button aria-label="Collapse the ribbon"><Icon w={11} h={7}><path d="m1 6 4.500-4.500L10 6" strokeWidth="1.300" /></Icon></button>
      </CollapseCell>
    </Ribbon>
  );
}

const ribbonTabs = ['File', 'Home', 'Insert', 'Page Layout', 'Formulas', 'Data', 'Review', 'View', 'Help'];

export default function App() {
  return (
    <Window>
      <GlobalStyle />
      <TitleBar>
        <QuickAccess>
          <AutoSave>AutoSave<Toggle role="switch" aria-checked="false">Off</Toggle></AutoSave>
          <BarButton $w={46} aria-label="Save"><SaveIcon /></BarButton>
          <BarButton $w={28} aria-label="Undo"><UndoIcon /><Chevron color="#fff" /></BarButton>
          <BarButton $w={46} $dim aria-label="Redo"><RedoIcon /><Chevron color="#fff" /></BarButton>
          <BarButton $w={18} aria-label="Customize toolbar"><Icon w={7} h={8} stroke="#fff"><path d="M0 1.500h7" /><path d="M0 4h7L3.500 7.500z" fill="#fff" stroke="none" /></Icon></BarButton>
          <DocTitle>Charts Basics<Icon w={6} h={4} stroke="none"><path d="M0 0h6L3 3.500z" fill="#fff" /></Icon></DocTitle>
        </QuickAccess>
        <SearchBox><Magnifier size={16} color="#0e5c2f" /><input placeholder="Search" aria-label="Search" /></SearchBox>
        <Account>
          <WarningIcon />
          <Email>idamensah16@gmail.com</Email>
          <Avatar>I</Avatar>
          <BarButton $w={46} aria-label="Ribbon display options"><Icon w={13} h={11} stroke="#fff"><path d="M.5.5h12v10H.5zM.5 2.500h12M6.500 9V5M4.500 6.500l2-2 2 2" /></Icon></BarButton>
          <BarButton $w={46} aria-label="Minimize"><Icon w={10} h={2} stroke="#fff" crisp><path d="M0 .5h10" /></Icon></BarButton>
          <BarButton $w={46} aria-label="Restore"><Icon w={10} h={10} stroke="#fff" crisp><path d="M.5 2.500h7v7h-7zM2.500 2.500v-2h7v7h-2" /></Icon></BarButton>
          <BarButton $w={46} aria-label="Close"><Icon w={10} h={10} stroke="#fff"><path d="m.5.5 9 9M9.500.5l-9 9" /></Icon></BarButton>
        </Account>
      </TitleBar>

      <RibbonTabs>
        {ribbonTabs.map(t => <RibbonTab key={t} href="#" $active={t === 'Home'}>{t}</RibbonTab>)}
        <TabActions>
          <ActionButton><ShareIcon />Share</ActionButton>
          <ActionButton><CommentIcon />Comments</ActionButton>
        </TabActions>
      </RibbonTabs>
      <RibbonGroups />

      <MessageBar role="alert">
        <Icon w={22} h={22} stroke={BLUE}><circle cx="11" cy="11" r="10" fill="#fff" strokeWidth="1.300" /><path d="M11 9v8M11 5v2" strokeWidth="2" /></Icon>
        <strong>SIGN IN TO OFFICE</strong>
        <span>It looks like your stored credentials are out of date. Please sign in as im3e@mtmail.mtsu.edu so we can verify your subscription.</span>
        <SignIn><u>S</u>ign In</SignIn>
        <CloseMessage aria-label="Dismiss"><Icon w={9} h={9} stroke="#666"><path d="m1 1 7 7M8 1 1 8" strokeWidth="1.800" /></Icon></CloseMessage>
      </MessageBar>

      <FormulaBar>
        <NameBox><input aria-label="Name box" defaultValue="K16" /><Triangle dir="down" color="#777" /></NameBox>
        <DotsSlot><Dots /></DotsSlot>
        <FormulaButtons>
          <button aria-label="Cancel"><Icon w={11} h={11} stroke="#bdbdbd"><path d="m1 1 9 9M10 1 1 10" strokeWidth="1.800" /></Icon></button>
          <button aria-label="Enter"><Icon w={13} h={11} stroke="#bdbdbd"><path d="m1 6 3.500 3.500L12 1.500" strokeWidth="2.200" /></Icon></button>
          <button aria-label="Insert function"><Glyph $italic $size={14}>fx</Glyph></button>
        </FormulaButtons>
        <FormulaField>
          <textarea aria-label="Formula" />
          <button aria-label="Collapse formula bar"><Icon w={8} h={6} stroke="#666"><path d="m1 5 3-3 3 3" strokeWidth="1.800" /></Icon></button>
        </FormulaField>
      </FormulaBar>

      <Workspace>
        <SheetFrame>
          <Sheet>
            <colgroup>
              <col style={{ width: 26 }} />
              {columns.map(([name, width]) => <col key={name} style={{ width }} />)}
            </colgroup>
            <thead>
              <tr>
                <Corner aria-label="Select all"><Icon w={12} h={12} stroke="none"><path d="M12 0v12H0z" fill="#b1b1b1" /></Icon></Corner>
                {columns.map(([name]) => <ColumnHead key={name} scope="col" $selected={name === SELECTED.col}>{name}</ColumnHead>)}
              </tr>
            </thead>
            <tbody>
              {Array.from({ length: 19 }, (_, i) => <SheetRow key={i} row={i + 1} />)}
              <tr><RowHead />{columns.map(([name]) => <Cell key={name} />)}</tr>
            </tbody>
          </Sheet>
        </SheetFrame>
        <VScroll>
          <ScrollButton aria-label="Scroll up"><Triangle dir="up" /></ScrollButton>
          <VThumb />
          <ScrollButton aria-label="Scroll down"><Triangle dir="down" /></ScrollButton>
        </VScroll>
      </Workspace>

      <SheetBar>
        <SheetNav>
          <Triangle dir="left" color="#bdbdbd" />
          <Triangle dir="right" color="#bdbdbd" />
        </SheetNav>
        <SheetTab $w={129} $rule>Four Chart Types</SheetTab>
        <SheetTab $w={213}>Four Chart Types-2 Data Series</SheetTab>
        <SheetTab $w={112} $active>Column &amp; Bar</SheetTab>
        <SheetTab $w={40} $rule>XY</SheetTab>
        <AddSheet aria-label="New sheet"><Icon w={17} h={17} stroke="#777"><circle cx="8.500" cy="8.500" r="7.500" /><path d="M4.500 8.500h8M8.500 4.500v8" strokeWidth="1.600" /></Icon></AddSheet>
        <SheetBarEnd>
          <Dots />
          <HScroll>
            <ScrollButton aria-label="Scroll left"><Triangle dir="left" /></ScrollButton>
            <HThumb />
            <ScrollButton aria-label="Scroll right"><Triangle dir="right" /></ScrollButton>
          </HScroll>
        </SheetBarEnd>
      </SheetBar>

      <StatusBar>
        Ready
        <StatusEnd>
          <ViewButton $on aria-label="Normal view"><Icon w={13} h={13} crisp stroke="#222"><path d="M.5.5h12v12H.5zM.5 4.500h12M.5 8.500h12M4.500.5v12M8.500.5v12" /></Icon></ViewButton>
          <ViewButton aria-label="Page layout view"><Icon w={14} h={13} crisp><path d="M.5.5h13v12H.5zM3.500 2.500h7v8h-7zM5 4.500h4M5 6.500h4M5 8.500h4" /></Icon></ViewButton>
          <ViewButton aria-label="Page break preview"><Icon w={14} h={13} crisp><path d="M.5.5h13v12H.5zM.5 7.500h8v-7M4.500.5v7" /></Icon></ViewButton>
          <ZoomControl>
            <button aria-label="Zoom out"><Icon w={8} h={9} crisp><path d="M0 4.500h8" /></Icon></button>
            <ZoomSlider type="range" aria-label="Zoom" defaultValue={50} />
            <button aria-label="Zoom in"><Icon w={8} h={9} crisp><path d="M0 4.500h8M4.500 1v8" /></Icon></button>
          </ZoomControl>
          100%
        </StatusEnd>
      </StatusBar>

      <Taskbar>
        <StartButton aria-label="Start"><Icon w={16} h={16} stroke="none"><path d="M0 2.300 6.500 1.400v6.200H0zM7.300 1.300 16 0v7.600H7.300zM0 8.400h6.500v6.200L0 13.700zM7.300 8.400H16V16l-8.700-1.300z" fill="#fff" /></Icon></StartButton>
        <TaskSearch><Magnifier size={17} color="#222" /><input placeholder="Type here to search" aria-label="Type here to search" /></TaskSearch>
        <TaskApps>
          <TaskApp aria-label="Cortana"><Icon w={16} h={16} stroke="#fff"><circle cx="8" cy="8" r="6.700" strokeWidth="2.200" /></Icon></TaskApp>
          <TaskApp aria-label="Task view"><TaskViewIcon /></TaskApp>
          <TaskApp aria-label="Edge"><EdgeIcon /></TaskApp>
          <TaskApp aria-label="Firefox"><FirefoxIcon /></TaskApp>
          <TaskApp $state="alert" aria-label="Store"><StoreIcon /></TaskApp>
          <TaskApp $state="running" aria-label="Chrome"><ChromeIcon /></TaskApp>
          <TaskApp aria-label="Netflix"><NetflixIcon /></TaskApp>
          <TaskApp aria-label="File Explorer"><ExplorerIcon /></TaskApp>
          <TaskApp aria-label="Mail"><MailIcon /></TaskApp>
          <TaskApp $state="active" aria-label="Excel"><ExcelIcon /></TaskApp>
        </TaskApps>
        <Tray>
          <BarButton $w={24} aria-label="Hidden icons"><Icon w={13} h={8} stroke="#fff"><path d="m1 7 5.500-5.500L12 7" strokeWidth="1.300" /></Icon></BarButton>
          <BarButton $w={24} aria-label="OneDrive">
            <Icon w={17} h={14} stroke="none"><path d="M3.500 10.500C0 10.500-.5 6 3 5.500 3 1 9.500-.5 11 3.500c3 0 4 2 4 4l-5 3z" fill="#b4b4b4" /><path d="M3.500 10.500C0 10.500-.5 6 3 5.500L10 9z" fill="#eee" /><circle cx="12" cy="9.500" r="4.500" fill="#1171c8" /><path d="M9.500 9c.5-2.500 4-2.500 4.700-.5M14.500 10c-.5 2.500-4 2.500-4.700.5" stroke="#fff" strokeWidth="1.200" /></Icon>
          </BarButton>
          <BarButton $w={24} aria-label="Volume"><Icon w={17} h={14} stroke="#fff"><path d="M.5 5v4.500H3L6.500 13V1.500L3 5zM9 5q1.500 2.200 0 4.500M11.300 3.500q2.500 3.700 0 7.500M13.500 1.500q4 5.700 0 11.500" /></Icon></BarButton>
          <Clock>7:33 PM<br />2/6/2021</Clock>
          <Notifications aria-label="Notifications">
            <Icon w={17} h={17} stroke="none"><path d="M0 0h16v12H7l-3.500 3.500V12H0z" fill="#fff" /><path d="M3 3.500h10M3 6h10M3 8.500h6" stroke="#3e3b2a" /></Icon>
            <Badge>2</Badge>
          </Notifications>
          <ShowDesktop aria-label="Show desktop" />
        </Tray>
      </Taskbar>
    </Window>
  );
}
